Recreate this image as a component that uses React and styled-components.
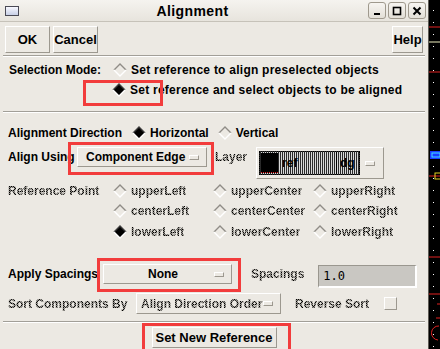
import React from "react";
import styled, { createGlobalStyle, css } from "styled-components";

const GlobalStyle = createGlobalStyle`
  html, body { margin: 0; padding: 0; background: #000; }
  body {
    font-family: "Liberation Sans", Arial, sans-serif;
    font-size: 12px;
    color: #000;
  }
`;

const stipple = css`
  color: transparent;
  background: repeating-conic-gradient(#000 0 25%, #8d8a83 0 50%) 0 0 / 2px 2px;
  -webkit-background-clip: text;
  background-clip: text;
`;

const raised = css`
  border-top: 1px solid #fff;
  border-left: 1px solid #fff;
  border-right: 1px solid #9c988f;
  border-bottom: 1px solid #9c988f;
`;

const Screen = styled.div`
  position: relative;
  display: flex;
  width: 440px;
  height: 349px;
  overflow: hidden;
`;

const Window = styled.div`
  flex: none;
  width: 428px;
  background: #ece9e3;
  border-right: 1px solid #5e5b55;
  display: flex;
  flex-direction: column;
`;

const TitleBar = styled.div`
  height: 21px;
  display: flex;
  align-items: center;
  padding: 0 2px 0 5px;
  background: linear-gradient(#f5f3ef, #e7e4dd);
  border-bottom: 1px solid #c6c2b9;
`;

const WinIcon = styled.div`
  width: 12px;
  height: 8px;
  border: 1px solid #4a4a55;
  background: linear-gradient(#f8f8ff, #c8d0e6);
`;

const Title = styled.div`
  flex: 1;
  text-align: center;
  font-weight: bold;
  font-size: 14px;
  letter-spacing: 0.4px;
`;

const TitleButton = styled.div`
  width: 16px;
  height: 15px;
  margin-left: 2px;
  border: 1px solid #9f998d;
  border-radius: 3px;
  background: linear-gradient(#f7f5f1, #e3dfd7);
  display: flex;
  align-items: center;
  justify-content: center;
`;

const Toolbar = styled.div`
  display: flex;
  gap: 3px;
  padding: 4px 5px 2px;
`;

const PushButton = styled.button`
  ${raised};
  width: ${(p) => p.$w}px;
  height: 27px;
  padding: 0;
  margin-left: ${(p) => (p.$right ? "auto" : "0")};
  background: #ece9e3;
  font-family: inherit;
  font-weight: bold;
  font-size: 13px;
  color: #000;
`;

const Separator = styled.div`
  margin: 0 3px;
  border-top: 1px solid #a29f98;
  border-bottom: 1px solid #fff;
`;

const SelectionSection = styled.div`
  display: grid;
  grid-template-columns: 103px auto;
  grid-auto-rows: 20px;
  padding: 3px 0 11px 9px;
  align-items: center;
`;

const Label = styled.span`
  font-weight: bold;
  white-space: nowrap;
  width: ${(p) => (p.$w ? `${p.$w}px` : "auto")};
  flex: none;
  ${(p) => p.$off && stipple};
`;

const RadioWrap = styled.div`
  display: flex;
  align-items: center;
  gap: 4px;
  margin-left: ${(p) => p.$ml || 0}px;
  grid-column: ${(p) => p.$col || "auto"};
  font-weight: bold;
  white-space: nowrap;
`;

const RadioText = styled.span`
  letter-spacing: ${(p) => (p.$wide ? "0.25px" : "0")};
  ${(p) => p.$off && stipple};
`;

const Diamond = ({ on }) => (
  <svg width="14" height="14" viewBox="0 0 14 14">
    {on && <polygon points="7,1 13,7 7,13 1,7" fill="#000" />}
    <polyline points="1,7 7,1 13,7" fill="none" stroke={on ? "#3c3c3c" : "#8f8c86"} strokeWidth="1.4" />
    <polyline points="1,7 7,13 13,7" fill="none" stroke="#fff" strokeWidth="1.4" />
  </svg>
);

const Radio = ({ on, off, wide, children, ml, col }) => (
  <RadioWrap $ml={ml} $col={col}>
    <Diamond on={on} />
    <RadioText $off={off} $wide={wide}>{children}</RadioText>
  </RadioWrap>
);

const AlignSection = styled.div`
  display: flex;
  flex-direction: column;
  padding: 10px 8px 0;
`;

const Row = styled.div`
  display: flex;
  align-items: ${(p) => p.$align || "center"};
  height: ${(p) => p.$h}px;
  margin-top: ${(p) => p.$mt || 0}px;
`;

const OptionMenu = styled.div`
  ${raised};
  box-sizing: border-box;
  width: ${(p) => p.$w}px;
  height: ${(p) => p.$h || 20}px;
  margin-left: ${(p) => p.$ml || 0}px;
  display: flex;
  align-items: center;
  padding: 0 7px 0 ${(p) => p.$pl || 8}px;
  font-weight: bold;
  flex: none;
`;

const OptionText = styled.span`
  flex: 1;
  text-align: ${(p) => (p.$center ? "center" : "left")};
  white-space: nowrap;
  ${(p) => p.$off && stipple};
`;

const Indicator = styled.span`
  ${raised};
  width: 8px;
  height: 3px;
  flex: none;
  background: #ece9e3;
`;

const LayerBox = styled.div`
  ${raised};
  box-sizing: border-box;
  width: 128px;
  height: 32px;
  margin-left: ${(p) => p.$ml}px;
  display: flex;
  align-items: center;
  padding: 0 8px 0 2px;
  gap: 5px;
`;

const Checker = styled.div`
  width: 102px;
  height: 24px;
  box-sizing: border-box;
  border: 1px dotted #000;
  background: repeating-linear-gradient(90deg, #2a2a2a 0 1px, #d8d8d8 1px 2px);
  display: flex;
  align-items: center;
  padding: 0 1px;
`;

const Swatch = styled.div`
  width: 17px;
  height: 20px;
  background: #000;
  border-bottom: 1px dotted #e02020;
  box-sizing: border-box;
`;

const LayerName = styled.span`
  font-weight: bold;
  font-size: 12px;
  color: #000;
  padding-left: ${(p) => p.$pl || 0}px;
  flex: ${(p) => (p.$grow ? 1 : "none")};
  height: 100%;
  display: flex;
  align-items: center;
  border-left: ${(p) => (p.$sep ? "1px solid #000" : "none")};
`;

const RefGrid = styled.div`
  display: grid;
  grid-template-columns: 105px 100px 100px 100px;
  grid-template-rows: 20px 20px 21px;
  align-items: center;
  margin-top: 2px;
`;

const Entry = styled.div`
  box-sizing: border-box;
  width: 99px;
  height: 23px;
  margin-left: ${(p) => p.$ml}px;
  margin-top: 1px;
  background: #c9c7c2;
  border-top: 1px solid #9a978f;
  border-left: 1px solid #9a978f;
  border-right: 2px solid #fff;
  border-bottom: 2px solid #fff;
  font-family: "DejaVu Sans Mono", "Liberation Mono", monospace;
  font-size: 12px;
  padding: 3px 0 0 4px;
`;

const CheckBox = styled.div`
  ${raised};
  width: 11px;
  height: 11px;
  margin-left: ${(p) => p.$ml}px;
  flex: none;
`;

const Footer = styled.div`
  display: flex;
  justify-content: center;
  padding-top: 4px;
`;

const FooterButton = styled.button`
  ${raised};
  width: 125px;
  height: 21px;
  padding: 0;
  background: #ece9e3;
  font-family: inherit;
  font-weight: bold;
  font-size: 13px;
  color: #000;
`;

const Canvas = styled.div`
  flex: 1;
  background: #000;
`;

const Mark = styled.div`
  position: absolute;
  left: ${(p) => p.$x}px;
  top: ${(p) => p.$y}px;
  width: ${(p) => p.$w}px;
  height: ${(p) => p.$h}px;
  border: 3px solid #f23c3c;
  box-sizing: border-box;
  pointer-events: none;
`;

const dots = Array.from({ length: 29 }, (_, i) => 10 + i * 12);

const CanvasArt = () => (
  <svg width="11" height="349" viewBox="0 0 11 349">
    {dots.map((y) => (
      <rect key={y} x="4" y={y} width="1" height="1" fill="#fff" />
    ))}
    <line x1="0" y1="27" x2="11" y2="27" stroke="#e02020" />
    <line x1="0" y1="42" x2="11" y2="42" stroke="#f0f0c0" />
    <line x1="0" y1="72" x2="11" y2="72" stroke="#e02020" />
    <rect x="1" y="151" width="10" height="8" fill="#1a3cff" />
    <rect x="3" y="153" width="8" height="4" fill="none" stroke="#40e0ff" />
    <line x1="0" y1="176" x2="11" y2="176" stroke="#e02020" />
    <rect x="6" y="173" width="6" height="6" fill="none" stroke="#e0d020" />
    <line x1="0" y1="257" x2="11" y2="257" stroke="#e02020" />
    <line x1="0" y1="294" x2="11" y2="294" stroke="#e02020" />
    <line x1="8" y1="304" x2="11" y2="304" stroke="#e02020" />
    <line x1="7" y1="318" x2="11" y2="318" stroke="#e02020" />
    <path d="M10 326 A 7 7 0 0 0 9 340" fill="none" stroke="#e02020" />
  </svg>
);

export default function App() {
  return (
    <>
      <GlobalStyle />
      <Screen>
        <Window>
          <TitleBar>
            <WinIcon />
            <Title>Alignment</Title>
            <TitleButton>
              <svg width="10" height="10" viewBox="0 0 10 10"><rect x="2" y="7" width="6" height="2" fill="#000" /></svg>
            </TitleButton>
            <TitleButton>
              <svg width="10" height="10" viewBox="0 0 10 10"><rect x="1.5" y="1.5" width="7" height="7" fill="none" stroke="#000" strokeWidth="1.6" /></svg>
            </TitleButton>
            <TitleButton>
              <svg width="10" height="10" viewBox="0 0 10 10"><path d="M1.5 1.5 L8.5 8.5 M8.5 1.5 L1.5 8.5" stroke="#000" strokeWidth="2" /></svg>
            </TitleButton>
          </TitleBar>

          <Toolbar>
            <PushButton $w={45}>OK</PushButton>
            <PushButton $w={45}>Cancel</PushButton>
            <PushButton $w={31} $right>Help</PushButton>
          </Toolbar>
          <Separator />

          <SelectionSection>
            <Label>Selection Mode:</Label>
            <Radio ml={1} wide>Set reference to align preselected objects</Radio>
            <Radio on wide col="2">Set reference and select objects to be aligned</Radio>
          </SelectionSection>
          <Separator />

          <AlignSection>
            <Row $h={20}>
              <Label $w={124}>Alignment Direction</Label>
              <Radio on>Horizontal</Radio>
              <Radio ml={9}>Vertical</Radio>
            </Row>
            <Row $h={32} $mt={4} $align="flex-start">
              <Row $h={20}>
                <Label $w={69}>Align Using</Label>
                <OptionMenu $w={130}>
                  <OptionText>Component Edge</OptionText>
                  <Indicator />
                </OptionMenu>
                <Label $off style={{ marginLeft: 8 }}>Layer</Label>
              </Row>
              <LayerBox $ml={9}>
                <Checker>
                  <Swatch />
                  <LayerName $pl={4} $grow>ref</LayerName>
                  <LayerName $pl={3} $sep style={{ width: 18 }}>dg</LayerName>
                </Checker>
                <Indicator />
              </LayerBox>
            </Row>
            <RefGrid>
              <Label $off>Reference Point</Label>
              <Radio off>upperLeft</Radio>
              <Radio off>upperCenter</Radio>
              <Radio off>upperRight</Radio>
              <Radio off col="2">centerLeft</Radio>
              <Radio off>centerCenter</Radio>
              <Radio off>centerRight</Radio>
              <Radio off on col="2">lowerLeft</Radio>
              <Radio off>lowerCenter</Radio>
              <Radio off>lowerRight</Radio>
            </RefGrid>

            <Row $h={24} $mt={22} $align="flex-start">
              <Row $h={20}>
                <Label $w={95}>Apply Spacings</Label>
                <OptionMenu $w={129}>
                  <OptionText $center>None</OptionText>
                  <Indicator />
                </OptionMenu>
                <Label $off style={{ marginLeft: 19 }}>Spacings</Label>
              </Row>
              <Entry $ml={14}>1.0</Entry>
            </Row>
            <Row $h={21} $mt={5}>
              <Label $off $w={128}>Sort Components By</Label>
              <OptionMenu $w={145} $h={21} $pl={4}>
                <OptionText $off>Align Direction Order</OptionText>
                <Indicator />
              </OptionMenu>
              <Label $off style={{ marginLeft: 14 }}>Reverse Sort</Label>
              <CheckBox $ml={15} />
            </Row>
          </AlignSection>

          <div style={{ height: 7 }} />
          <Separator />
          <Footer>
            <FooterButton>Set New Reference</FooterButton>
          </Footer>
        </Window>
        <Canvas>
          <CanvasArt />
        </Canvas>

        <Mark $x={83} $y={80} $w={80} $h={26} />
        <Mark $x={68} $y={142} $w={146} $h={33} />
        <Mark $x={97} $y={258} $w={144} $h={34} />
        <Mark $x={142} $y={323} $w={149} $h={30} />
      </Screen>
    </>
  );
}
